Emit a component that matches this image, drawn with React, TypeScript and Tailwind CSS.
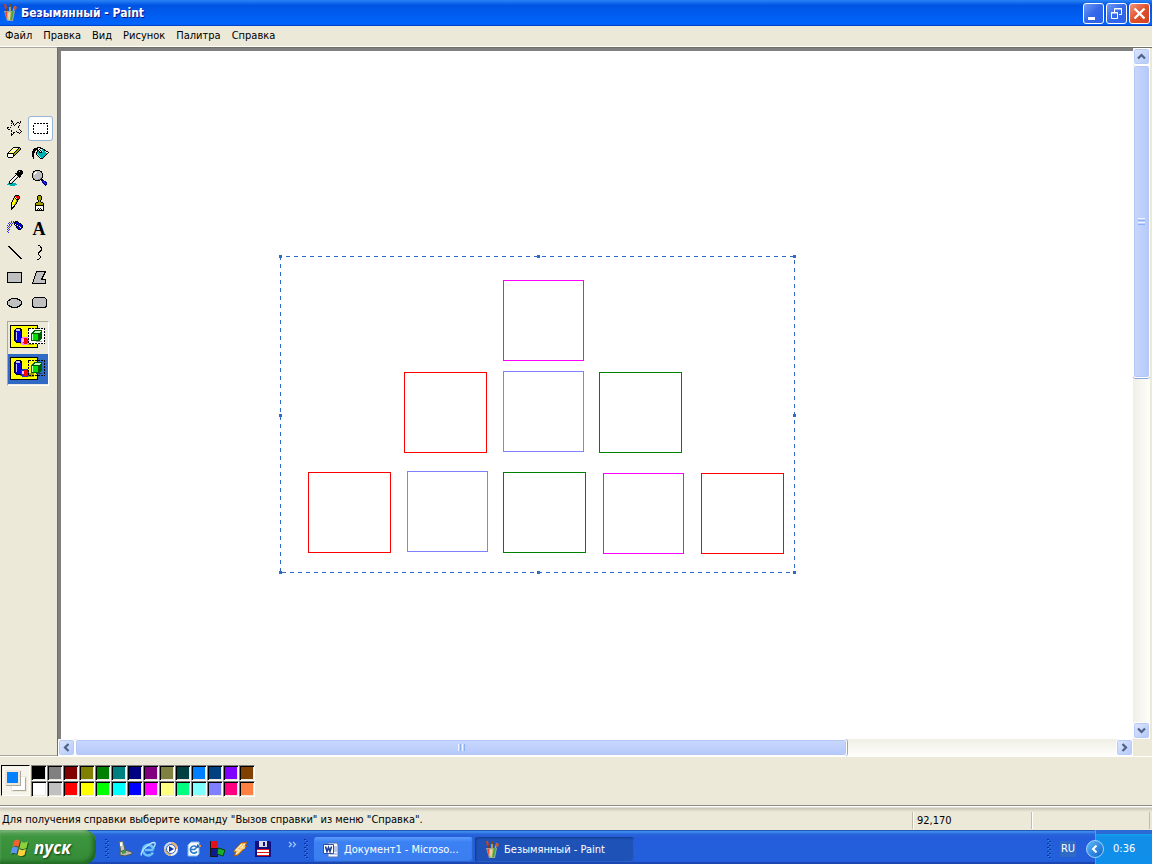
import React, { useState } from 'react';

const MENUS = ['Файл', 'Правка', 'Вид', 'Рисунок', 'Палитра', 'Справка'];

const COLORS = [
  ['#000000', '#808080', '#800000', '#808000', '#008000', '#008080', '#000080', '#800080', '#808040', '#004040', '#0080ff', '#004080', '#8000ff', '#804000'],
  ['#ffffff', '#c0c0c0', '#ff0000', '#ffff00', '#00ff00', '#00ffff', '#0000ff', '#ff00ff', '#ffff80', '#00ff80', '#80ffff', '#8080ff', '#ff0080', '#ff8040'],
];

const SQUARES = [
  { x: 442, y: 229, w: 81, h: 81, c: '#ff00ff' },
  { x: 343, y: 321, w: 83, h: 81, c: '#ff0000' },
  { x: 442, y: 320, w: 81, h: 81, c: '#8080ff' },
  { x: 538, y: 321, w: 83, h: 81, c: '#008000' },
  { x: 247, y: 421, w: 83, h: 81, c: '#ff0000' },
  { x: 346, y: 420, w: 81, h: 81, c: '#8080ff' },
  { x: 442, y: 421, w: 83, h: 81, c: '#008000' },
  { x: 542, y: 422, w: 81, h: 81, c: '#ff00ff' },
  { x: 640, y: 422, w: 83, h: 81, c: '#ff0000' },
];

const HANDLES = [
  [219, 205], [477, 205], [733, 205],
  [219, 364], [733, 364],
  [219, 521], [477, 521], [733, 521],
];

function BrushCup({ className = '' }: { className?: string }) {
  return (
    <svg className={className} width="16" height="18" viewBox="0 0 16 18" aria-hidden="true">
      <path d="M3 1l3 9" stroke="#7a3a18" strokeWidth="1.500" />
      <path d="M2 0h2l1 4-2 1z" fill="#c4442c" />
      <path d="M8 1v9" stroke="#e4b33c" strokeWidth="1.500" />
      <path d="M7 0h2v3H7z" fill="#6b4b2a" />
      <path d="M13 2l-3 9" stroke="#c9a25f" strokeWidth="1.500" />
      <path d="M12 2l3 1-1 3-2-1z" fill="#c9572d" />
      <path d="M2 7h11l-2 10H5z" fill="#9aa7a4" />
      <path d="M4 8l2 7" stroke="#f0452a" strokeWidth="2" />
      <path d="M7.500 8v8" stroke="#ffd34a" strokeWidth="2" />
      <path d="M11 7l-2 9" stroke="#47a63e" strokeWidth="2" />
      <path d="M6 9v6" stroke="#e8eef0" strokeWidth="1" />
    </svg>
  );
}

const INKS: Record<string, string> = {
  K: '#000000', W: '#ffffff', y: '#ffff80', Y: '#ffff00', o: '#a0a000', R: '#ff0000',
  g: '#c0c0c0', d: '#808080', C: '#00b0b0', c: '#80ffff', B: '#0000e0', b: '#3030ff', N: '#000080',
};

function Icon({ children }: { children: React.ReactNode }) {
  return (
    <svg width="25" height="25" viewBox="0 0 25 25" fill="none" shapeRendering="crispEdges" className="block" aria-hidden="true">
      {children}
    </svg>
  );
}

function Bitmap({ x, y, rows }: { x: number; y: number; rows: string[] }) {
  return (
    <Icon>
      {rows.flatMap((row, j) =>
        [...row].map((ch, i) =>
          INKS[ch] ? <rect key={`${i}-${j}`} x={x + i} y={y + j} width="1" height="1" fill={INKS[ch]} /> : null,
        ),
      )}
    </Icon>
  );
}

const STAR = [
  '....K..........',
  '....KK.......K.',
  '.....K....KK.K.',
  '....K.K..K..K..',
  '......K.K......',
  '....K..K....K..',
  '...........K...',
  'KK.K.......K...',
  'K..............',
  '.KK.........K..',
  '....K........K.',
  '....K....K....K',
  '......KK..KK.K.',
  '....K.K.....K..',
  '....KK.........',
  '....K..........',
];

const ERASER = [
  '......KKKKKKK.',
  '.....KyWyWyKoK',
  '....KyyyWyKooK',
  '...KyWyWyKooK.',
  '..KyyyWyKooK..',
  '.KyyWyyKooK...',
  'KKKKKKKooK....',
  'KWWWWWKoK.....',
  'KWWWWWKK......',
  'KWWWWWK.......',
  '.KKKKK........',
];

const BUCKET = [
  '.....KKKK........',
  '..KKKKWWKKK......',
  '.KKKKKWK..CKK....',
  '.KKK.KKWK.CCKK...',
  'KKK..KCKWKcCCWKK.',
  'KKK.KCCKKKCCCCWWK',
  'KK..KCCCCCCCCCCK.',
  'KK..KcCCCCCCCCK..',
  'KK...KcCCCCCCK...',
  'KK....KcCCCCK....',
  '.K.....KcCCK.....',
  '.K......KKK......',
];

const DROPPER = [
  '...........KKKK.',
  '..........KKgKKK',
  '..........KKKKKK',
  '........KKKKKKKK',
  '.........KKKKKK.',
  '........KWKKKK..',
  '.......KWWgKKK..',
  '......KWWgK.K...',
  '.....KWWgK......',
  '....KWWgK.......',
  '...KWWgK........',
  '..KWWgK.........',
  '..KWgK..........',
  '.CKKKCCCC.......',
  'CCCCCCCCCC......',
  '...CCCCC........',
];

const MAGNIFIER = [
  '...KKKKK.......',
  '.KKgggggKK.....',
  '.KgWWggggK.....',
  'KgWWggggggK....',
  'KgWgggggggK....',
  'KgggggggggK....',
  'KgggggggggK....',
  'KggggggggdK....',
  '.KggggggdK.....',
  '.KKgggddKKK....',
  '...KKKKK.KNN...',
  '..........NbBN.',
  '..........NBbBN',
  '...........NBbN',
  '............NBN',
  '.............N.',
];

const PENCIL = [
  '....KKKK.',
  '...KRRRRK',
  '...KWRRRK',
  '..KYKWRRK',
  '..KYYKKK.',
  '.KYYYoK..',
  '.KYYYoK..',
  'KYYYoK...',
  'KYYYoK...',
  'KYYoK....',
  'KWWK.....',
  'KWKK.....',
  'KKK......',
  'KK.......',
  'K........',
];

const BRUSH = [
  '...KKK...',
  '..KoooK..',
  '..KoooK..',
  '..KoooK..',
  '..KoooK..',
  '...KoK...',
  '...KoK...',
  '.KKoooKK.',
  'KoooooooK',
  'KoooooooK',
  'KKKKKKKKK',
  'KWWWWWWWK',
  'KWWWWWWWK',
  'KWWKWKWWK',
  'KWKWKWKWK',
  'KKKKKKKKK',
];

const SPRAY = [
  '....b.b.KKK.....',
  '..b.b.bKBBBK....',
  '.b.b.b.KKBBBKK..',
  '..b.b..KWKBBBBK.',
  'b.b.b...KBWKBBBK',
  '.b.b.....KBBWBBK',
  'b.b......KBBBWBK',
  '.b........KBBBK.',
  'b.b........KKK..',
  '.b..............',
  'b...............',
  '.b..............',
];

const LINE = [
  'KK............', '.KK...........', '..KK..........', '...KK.........', '....KK........',
  '.....KK.......', '......KK......', '.......KK.....', '........KK....', '.........KK...',
  '..........KK..', '...........KK.', '............KK',
];

const CURVE = [
  '..KK...', '....K..', '....KK.', '.....K.', '.....K.', '....KK.', '...KK..',
  '..KK...', '..K....', '..K....', '...K...', '....K..', '....K..', '...K...', '.KK....',
];

const TOOLS: { name: string; icon: React.ReactNode }[] = [
  { name: 'Выделение произвольной области', icon: <Bitmap x={4} y={4} rows={STAR} /> },
  {
    name: 'Выделение',
    icon: <Icon><rect x="5.500" y="7.500" width="14" height="10" stroke="#000" strokeDasharray="2 1" /></Icon>,
  },
  { name: 'Ластик', icon: <Bitmap x={4} y={6} rows={ERASER} /> },
  { name: 'Заливка', icon: <Bitmap x={4} y={6} rows={BUCKET} /> },
  { name: 'Выбор цветов', icon: <Bitmap x={4} y={4} rows={DROPPER} /> },
  { name: 'Масштаб', icon: <Bitmap x={4} y={4} rows={MAGNIFIER} /> },
  { name: 'Карандаш', icon: <Bitmap x={8} y={4} rows={PENCIL} /> },
  { name: 'Кисть', icon: <Bitmap x={7} y={4} rows={BRUSH} /> },
  { name: 'Распылитель', icon: <Bitmap x={4} y={5} rows={SPRAY} /> },
  {
    name: 'Надпись',
    icon: <span className="flex h-[23px] w-[22px] items-center justify-center font-['Liberation_Serif',serif] text-[18px] leading-none font-bold text-black">A</span>,
  },
  { name: 'Линия', icon: <Bitmap x={5} y={5} rows={LINE} /> },
  { name: 'Кривая', icon: <Bitmap x={8} y={4} rows={CURVE} /> },
  {
    name: 'Прямоугольник',
    icon: <Icon><rect x="4.500" y="6.500" width="14" height="10" fill="#c0c0c0" stroke="#000" /></Icon>,
  },
  {
    name: 'Многоугольник',
    icon: <Icon><path d="M8.500 5.500h9l-4 8h4v4h-13z" fill="#c0c0c0" stroke="#000" /></Icon>,
  },
  {
    name: 'Эллипс',
    icon: <Icon><ellipse cx="11.500" cy="12" rx="7" ry="4.500" fill="#c0c0c0" stroke="#000" /></Icon>,
  },
  {
    name: 'Скругленный прямоугольник',
    icon: <Icon><rect x="4.500" y="6.500" width="14" height="10" rx="3" fill="#c0c0c0" stroke="#000" /></Icon>,
  },
];

function OpaqueIcon({ transparent }: { transparent: boolean }) {
  return (
    <svg width="37" height="25" viewBox="0 0 37 25" fill="none" shapeRendering="crispEdges" className="block" aria-hidden="true">
      <rect x="0.500" y="0.500" width="27" height="22" fill="#ffff00" stroke="#000" />
      <path d="M17 16h7v4h-7zM12 14v3l-2 2z" fill="#a0a000" />
      <path d="M4 5l2-2h4l2 2v11l-2 2H6l-2-2z" fill="#000" />
      <path d="M5 6h6v10l-1 1H6l-1-1z" fill="#0000e0" />
      <path d="M6 4h4v2H6zM6 7h1v8H6z" fill="#c0c0ff" />
      {!transparent && <path d="M18 4h17v15H18z" fill="#fff" />}
      <circle cx="15" cy="16" r="4.500" fill={transparent ? '#2030c0' : '#ff80ff'} />
      <circle cx="15.500" cy="16" r="3" fill="#ff0000" />
      <path d="M12 14h2v3h-2z" fill="#ffc0ff" />
      <path d="M27 16h7l-4 1h-5z" fill={transparent ? '#204080' : '#a0a0a0'} />
      <path d="M21 8l3-3h8v8l-3 3h-8z" fill="#006000" />
      <path d="M22 9h6v6h-6z" fill="#00e000" />
      <path d="M23 8l2-2h6l-2 2z" fill="#c0ffc0" />
      <path d="M22 9h1v6h-1z" fill="#c0ffc0" />
      <rect x="18.500" y="3.500" width="16" height="15" stroke="#000" strokeDasharray="2 1" />
    </svg>
  );
}

const SCROLL_BUTTON =
  'flex size-[17px] shrink-0 items-center justify-center rounded-[3px] border border-white bg-linear-to-br from-[#dce6ff] to-[#b3c8f8] shadow-[inset_0_0_0_1px_#b8cbf6]';

function ScrollArrow({ rotate, label }: { rotate: string; label: string }) {
  return (
    <button type="button" aria-label={label} className={SCROLL_BUTTON}>
      <svg width="9" height="9" viewBox="0 0 9 9" fill="none" className={rotate} aria-hidden="true">
        <path d="M1 6.500L4.500 3L8 6.500" stroke="#4d6185" strokeWidth="2.200" />
      </svg>
    </button>
  );
}

function WindowButton({ label, close, children }: { label: string; close?: boolean; children: React.ReactNode }) {
  return (
    <button
      type="button"
      aria-label={label}
      className={`flex size-[21px] items-center justify-center rounded-[3px] border border-white ${
        close ? 'bg-linear-to-br from-[#f0937a] via-[#e0502b] to-[#d0431a]' : 'bg-linear-to-br from-[#6f9bf5] via-[#3567e8] to-[#2a62ec]'
      }`}
    >
      <svg width="19" height="19" viewBox="0 0 19 19" fill="none" aria-hidden="true">
        {children}
      </svg>
    </button>
  );
}

function Grip() {
  return (
    <svg width="6" height="20" viewBox="0 0 6 20" shapeRendering="crispEdges" className="shrink-0" aria-hidden="true">
      {[0, 4, 8, 12, 16].map((y) => (
        <g key={y}>
          <path d={`M1 ${y}h2v1H1zM3 ${y + 2}h2v1H3z`} fill="#0c2f9c" />
          <path d={`M2 ${y + 1}h1v1H2zM4 ${y + 3}h1v1H4z`} fill="#2a8ef0" />
        </g>
      ))}
    </svg>
  );
}

const QUICK: { name: string; icon: React.ReactNode }[] = [
  {
    name: 'Сканер',
    icon: (
      <>
        <path d="M2 1l4-1 2 9-4 2z" fill="#c5cac2" stroke="#5d6458" />
        <path d="M3 11l5-2 7 2v2l-7 2-5-1z" fill="#b9b7ae" stroke="#50554c" />
        <path d="M5 10l4-1v3l-4 1z" fill="#3f9a3c" />
        <path d="M3 2l2-1v4H3z" fill="#fff" />
      </>
    ),
  },
  {
    name: 'Internet Explorer',
    icon: (
      <>
        <path d="M13.500 9H5M13 11.500a5.300 5.300 0 1 1 .5-3" stroke="#6cc4f8" strokeWidth="2.600" />
        <path d="M1.500 14.500c-2-3 7-13 13-13 1.500 1 .5 3-1 5" stroke="#b9e7ff" strokeWidth="1.300" />
      </>
    ),
  },
  {
    name: 'Проигрыватель',
    icon: (
      <>
        <circle cx="8" cy="8" r="7" fill="#eef2fb" />
        <path d="M8 1a7 7 0 0 1 7 7h-3a4 4 0 0 0-4-4z" fill="#f0b070" />
        <path d="M1 8a7 7 0 0 1 7-7v3a4 4 0 0 0-4 4z" fill="#c5d4ee" />
        <path d="M8 15a7 7 0 0 1-7-7h3a4 4 0 0 0 4 4z" fill="#c8b58a" />
        <circle cx="8" cy="8" r="4.500" fill="#fff" stroke="#3463c8" />
        <path d="M6 5l5 3-5 3z" fill="#153a9c" />
      </>
    ),
  },
  {
    name: 'Outlook Express',
    icon: (
      <>
        <path d="M2 4l3-3h8v12l-2 2H2z" fill="#f5faff" stroke="#88b9e8" />
        <path d="M10.500 6a3.600 3.600 0 1 0 .5 4.500M4.500 8.500h4l4-4" stroke="#2d7dc6" strokeWidth="1.600" />
        <path d="M11 3l4 3-4 1z" fill="#2468b8" />
        <path d="M13 4h2v2h-2z" fill="#f08a35" />
      </>
    ),
  },
  {
    name: 'Кубики',
    icon: (
      <>
        <path d="M1 0h8v16H1z" fill="#181818" />
        <path d="M2 0h7v7H2z" fill="#e6101e" />
        <path d="M2 8h6v7H2z" fill="#101a90" />
        <path d="M9 7l7 2-2 6-6-2z" fill="#16b12c" stroke="#073f0e" />
      </>
    ),
  },
  {
    name: 'Winamp',
    icon: (
      <>
        <path d="M9 2l6-1-2 4h2L6 14l-4 1 2-4H1z" fill="#f6b34c" stroke="#a55c16" />
        <path d="M10 3L4 9h4l-4 4M13 3l-4 4h4" stroke="#fff3c2" strokeWidth="1.200" />
      </>
    ),
  },
  {
    name: 'Total Commander',
    icon: (
      <>
        <path d="M0 0h15l1 1v15H0z" fill="#101080" />
        <path d="M4 0h8v6H4z" fill="#d7d9e5" />
        <path d="M8 1h2v4H8z" fill="#101080" />
        <path d="M2 8h12v7H2z" fill="#fff" />
        <path d="M2 8h12v1H2zM2 11h12v1H2zM2 14h12v1H2z" fill="#e01818" />
      </>
    ),
  },
];

function Flag() {
  return (
    <svg width="20" height="18" viewBox="0 0 20 18" aria-hidden="true" className="drop-shadow-[1px_1px_0_#1a5420]">
      <path d="M4 2c2-2 4-2 6 0L8.500 8C6.500 6.500 4.500 6.500 2.500 8z" fill="#f0622f" />
      <path d="M11 2.500c2 1.500 4 1.500 7 0L16.500 9c-2 1.500-5 1.500-7 0z" fill="#8cd03c" />
      <path d="M2 9c2-2 4-2 6 0L6.500 15C4.500 13.500 2.500 13.500 0.500 15z" fill="#5b95f5" />
      <path d="M9 10c2 1.500 4 1.500 7 0l-1.500 6c-2 1.500-5 1.500-7 0z" fill="#fbd03b" />
    </svg>
  );
}

export default function App() {
  const [tool, setTool] = useState(1);
  const [transparent, setTransparent] = useState(true);
  const [ink, setInk] = useState('#0080ff');

  return (
    <div className="flex h-screen flex-col overflow-hidden bg-[#ece9d8] font-['DejaVu_Sans_Condensed','Noto_Sans',sans-serif] text-[11px] leading-[14px] text-black">
      <header className="flex h-[26px] shrink-0 items-center bg-linear-to-b from-[#2a83f5] from-0% via-[#0054e3] via-20% to-[#0066ff] pr-[2px] pl-[2px] shadow-[inset_0_-2px_1px_-1px_#0040c0]">
        <BrushCup />
        <h1 className="ml-[3px] flex-1 text-[12px] font-bold text-white [text-shadow:1px_1px_0_#0a1883]">Безымянный - Paint</h1>
        <div className="flex gap-[2px]">
          <WindowButton label="Свернуть"><path d="M4 13h7v3H4z" fill="#fff" /></WindowButton>
          <WindowButton label="Восстановить">
            <path d="M7.500 8V4.500h7v6H12M7 5h8" stroke="#fff" />
            <path d="M4.500 8.500h6v6h-6zM4 9h7" stroke="#fff" />
          </WindowButton>
          <WindowButton label="Закрыть" close><path d="M4.500 4.500l10 10M14.500 4.500l-10 10" stroke="#fff" strokeWidth="2.400" /></WindowButton>
        </div>
      </header>

      <nav className="flex h-[20px] shrink-0 items-center gap-[11px] pl-[5px]">
        {MENUS.map((m) => (
          <button key={m} type="button" className="whitespace-nowrap">{m}</button>
        ))}
      </nav>

      <div className="flex min-h-0 flex-1 border-t border-white">
        <aside className="flex w-[57px] shrink-0 flex-col border-t border-b border-[#aca899] pt-[68px]">
          <div className="ml-[3px] grid w-[50px] grid-cols-2">
            {TOOLS.map((t, i) => (
              <button
                key={t.name}
                type="button"
                aria-label={t.name}
                aria-pressed={tool === i}
                onClick={() => setTool(i)}
                className={`size-[25px] rounded-[3px] ${tool === i ? 'bg-white shadow-[inset_0_0_0_1px_#98b5d6]' : ''}`}
              >
                {t.icon}
              </button>
            ))}
          </div>
          <div className="mt-[5px] ml-[7px] flex w-[42px] flex-col gap-[2px] border border-t-[#aca899] border-r-white border-b-white border-l-[#aca899] pb-px">
            {[false, true].map((v) => (
              <button
                key={String(v)}
                type="button"
                aria-label={v ? 'Прозрачный фон' : 'Непрозрачный фон'}
                aria-pressed={transparent === v}
                onClick={() => setTransparent(v)}
                className={`flex h-[30px] w-full items-center pl-[2px] ${transparent === v ? 'bg-[#316ac5]' : ''}`}
              >
                <OpaqueIcon transparent={v} />
              </button>
            ))}
          </div>
        </aside>

        <main className="flex min-w-0 flex-1 flex-col border-t border-l border-[#716f64] pr-[2px]">
          <div className="flex min-h-0 flex-1">
            <div className="min-w-0 flex-1 overflow-hidden border-t-3 border-l-3 border-[#808080] bg-white">
              <svg width="740" height="530" viewBox="0 0 740 530" fill="none" shapeRendering="crispEdges" className="block" role="img" aria-label="Холст">
                {SQUARES.map((s) => (
                  <rect key={`${s.x}-${s.y}`} x={s.x + 0.5} y={s.y + 0.5} width={s.w - 1} height={s.h - 1} stroke={s.c} />
                ))}
                <g stroke="#316ac5" strokeDasharray="4 4">
                  <path d="M219 205.500H734" strokeDashoffset="2" />
                  <path d="M219 521.500H734" strokeDashoffset="6" />
                  <path d="M219.500 205V522" />
                  <path d="M733.500 205V522" strokeDashoffset="4" />
                </g>
                {HANDLES.map(([x, y]) => (
                  <rect key={`${x}-${y}`} x={x - 1} y={y - 1} width="3" height="3" fill="#316ac5" />
                ))}
              </svg>
            </div>
            <div className="flex w-[17px] shrink-0 flex-col bg-linear-to-r from-[#f0efe6] to-[#fefefb]">
              <ScrollArrow rotate="rotate-0" label="Вверх" />
              <div className="flex min-h-0 flex-1 flex-col">
                <div className="flex h-[47.700%] flex-col items-center justify-center gap-px rounded-[3px] border border-white bg-linear-to-r from-[#c9d7fc] to-[#b4c9fa] shadow-[inset_0_0_0_1px_#b5c8f5,0_1px_0_#8ba7e0]">
                  <i className="h-px w-[7px] bg-[#eef4fe]" /><i className="h-px w-[7px] bg-[#8cb0f8]" />
                  <i className="h-px w-[7px] bg-[#eef4fe]" /><i className="h-px w-[7px] bg-[#8cb0f8]" />
                </div>
              </div>
              <ScrollArrow rotate="rotate-180" label="Вниз" />
            </div>
          </div>
          <div className="flex h-[17px] shrink-0 pr-[17px]">
            <div className="flex min-w-0 flex-1 bg-linear-to-b from-[#f0efe6] to-[#fefefb]">
              <ScrollArrow rotate="-rotate-90" label="Влево" />
              <div className="flex min-w-0 flex-1">
                <div className="flex w-[74.200%] items-center justify-center gap-px rounded-[3px] border border-white bg-linear-to-b from-[#c9d7fc] to-[#b4c9fa] shadow-[inset_0_0_0_1px_#b5c8f5,1px_0_0_#8ba7e0]">
                  <i className="h-[7px] w-px bg-[#eef4fe]" /><i className="h-[7px] w-px bg-[#8cb0f8]" />
                  <i className="h-[7px] w-px bg-[#eef4fe]" /><i className="h-[7px] w-px bg-[#8cb0f8]" />
                </div>
              </div>
              <ScrollArrow rotate="rotate-90" label="Вправо" />
            </div>
          </div>
        </main>
      </div>

      <section className="flex h-[49px] shrink-0 items-start border-t border-white pt-[8px]">
        <div className="mr-px ml-px grid h-[31px] w-[29px] grid-cols-1 border border-t-black border-r-white border-b-white border-l-black bg-[#f6f4ec]">
          <i className="col-start-1 row-start-1 mt-[11px] ml-[10px] size-[14px] border border-t-white border-r-[#aca899] border-b-[#aca899] border-l-white bg-white shadow-[0_0_0_1px_#ece9d8]" />
          <i className="relative col-start-1 row-start-1 mt-[4px] ml-[3px] size-[15px] border-2 border-[#ece9d8] shadow-[1px_1px_0_#aca899]" style={{ backgroundColor: ink }} />
        </div>
        <div className="grid grid-cols-[repeat(14,16px)]">
          {COLORS.flat().map((c) => (
            <button
              key={c}
              type="button"
              aria-label={c}
              onClick={() => setInk(c)}
              className="size-4 border border-t-[#808080] border-r-white border-b-white border-l-[#808080] shadow-[inset_1px_1px_0_#000,inset_-1px_-1px_0_#ece9d8]"
              style={{ backgroundColor: c }}
            />
          ))}
        </div>
      </section>

      <footer className="flex h-[25px] shrink-0 items-center border-t border-[#8e8b80] bg-linear-to-b from-white from-4% via-[#c9c6b8] via-8% to-[#ece9d8] to-25% pr-[2px] shadow-[inset_0_1px_0_#fff]">
        <p className="min-w-0 flex-1 pt-[4px] pl-[2px]">Для получения справки выберите команду "Вызов справки" из меню "Справка".</p>
        <p className="mt-[4px] h-[17px] w-[119px] border-l border-[#c0bdaf] pt-[2px] pl-[4px] shadow-[inset_1px_0_0_#fff]">92,170</p>
        <p className="mt-[4px] h-[17px] w-[119px] border-x border-[#c0bdaf] shadow-[inset_1px_0_0_#fff]" />
      </footer>

      <div className="flex h-[34px] shrink-0 items-stretch bg-linear-to-b from-[#2d68d5] from-0% via-[#245ddb] via-25% to-[#2360dc] text-white shadow-[inset_0_1px_0_#2557b5,inset_0_4px_2px_-1px_#3d8ef0,inset_0_-2px_1px_#1b46b0]">
        <button type="button" className="flex w-[96px] items-center gap-[4px] rounded-r-[12px] bg-linear-to-b from-[#66a666] from-0% via-[#3c963e] via-20% to-[#358a37] pt-[2px] pl-[10px] shadow-[inset_-3px_-2px_4px_#1d6320,inset_0_2px_2px_#7dbb7c]">
          <Flag />
          <span className="font-['Open_Sans',sans-serif] text-[17px] leading-[20px] font-bold italic [text-shadow:1px_1px_2px_#123f14]">пуск</span>
        </button>
        <div className="ml-[8px] flex items-center pt-[4px]">
          <Grip />
          <div className="ml-[7px] flex gap-[7px]">
            {QUICK.map((q) => (
              <button key={q.name} type="button" aria-label={q.name} className="size-4">
                <svg width="16" height="16" viewBox="0 0 16 16" fill="none" aria-hidden="true">{q.icon}</svg>
              </button>
            ))}
          </div>
          <button type="button" aria-label="Ещё" className="mr-[6px] mb-[10px] ml-[17px]">
            <svg width="9" height="7" viewBox="0 0 9 7" fill="none" stroke="#9cc4fb" strokeWidth="1.300" aria-hidden="true"><path d="M1 1l2.500 2.500L1 6M5 1l2.500 2.500L5 6" /></svg>
          </button>
          <Grip />
        </div>
        <div className="mt-[7px] mb-[2px] ml-[5px] flex flex-1 gap-[2px]">
          <button type="button" className="flex w-[159px] items-center gap-[5px] rounded-[3px] bg-linear-to-b from-[#5a9bfb] from-0% via-[#3c81f3] via-20% to-[#3a7df0] pl-[9px] shadow-[inset_-1px_-1px_1px_#2c63cc]">
            <svg width="16" height="16" viewBox="0 0 16 16" fill="none" aria-hidden="true">
              <path d="M5 1h9l1 2v12H5z" fill="#f7f9fe" stroke="#5b73b4" />
              <path d="M11 5h3M11 7h3M11 9h3M7 12h7" stroke="#7d97cf" />
              <path d="M0.500 2.500h10v9h-10z" fill="#fff" stroke="#2c52a4" />
              <path d="M2.500 4.500l1.500 5 1.500-4 1.500 4 1.500-5" stroke="#1c3f94" strokeWidth="1.600" />
            </svg>
            <span>Документ1 - Microso...</span>
          </button>
          <button type="button" aria-pressed="true" className="flex w-[159px] items-center gap-[4px] rounded-[3px] bg-[#1e52b7] pt-px pl-[9px] shadow-[inset_1px_1px_2px_#123a86,inset_-1px_-1px_1px_#2a62cc]">
            <BrushCup />
            <span>Безымянный - Paint</span>
          </button>
        </div>
        <div className="flex items-center pt-[4px]">
          <Grip />
          <button type="button" className="ml-[8px] h-4 w-4 bg-[#316ac5]">RU</button>
        </div>
        <div className="ml-[19px] flex w-[57px] items-center border-l border-[#12bdf8] bg-linear-to-b from-[#19b9f7] from-0% via-[#1290e8] via-20% to-[#0f8eea] pt-[4px] shadow-[inset_0_5px_0_-1px_#2b6ad4]">
          <button type="button" aria-label="Показать скрытые значки" className="-ml-[10px] flex size-[18px] items-center justify-center rounded-full border border-[#9fd4ff] bg-linear-to-br from-[#5db8fb] to-[#0a62c8]">
            <svg width="8" height="8" viewBox="0 0 8 8" fill="none" stroke="#fff" strokeWidth="2" aria-hidden="true"><path d="M5.500 0.500L2 4l3.500 3.500" /></svg>
          </button>
          <time className="ml-[9px]">0:36</time>
        </div>
      </div>
    </div>
  );
}
